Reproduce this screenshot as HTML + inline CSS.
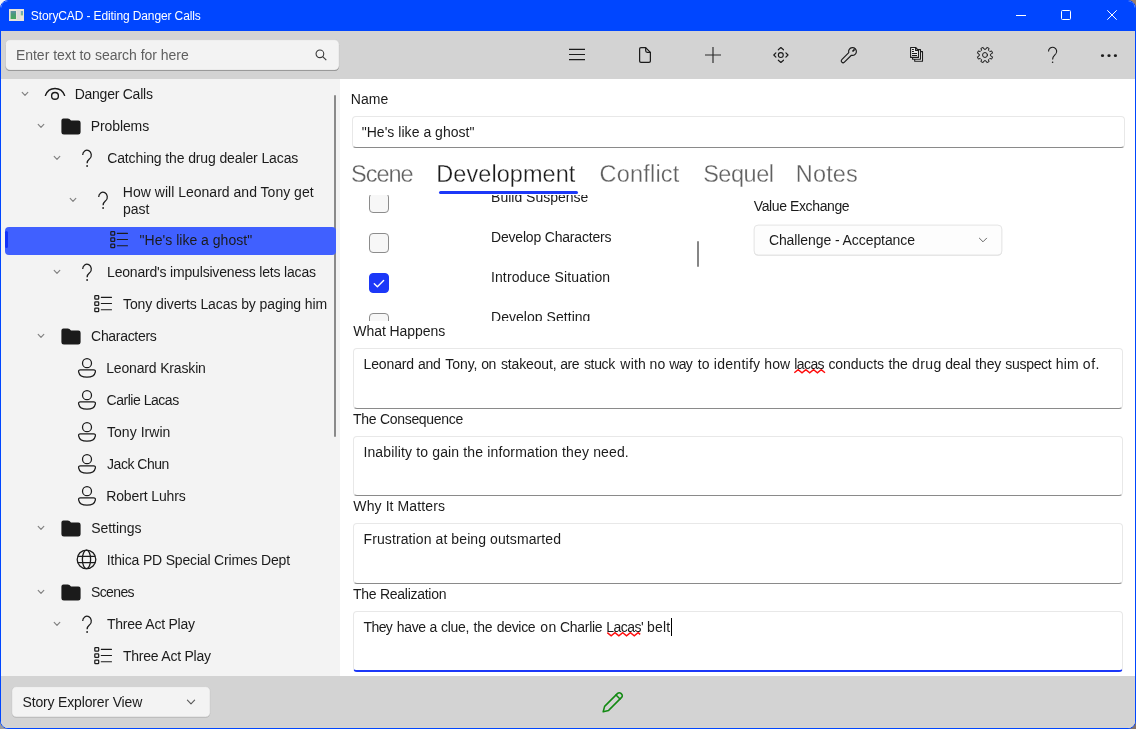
<!DOCTYPE html>
<html lang="en"><head><meta charset="utf-8"><title>StoryCAD - Editing Danger Calls</title>
<style>
html,body{margin:0;padding:0}
body{width:1136px;height:729px;overflow:hidden;position:relative;background:#8a7a70;font-family:"Liberation Sans", sans-serif;font-size:14px;color:#1b1b1b}
.win{position:absolute;left:0;top:0;width:1134px;height:727px;border:1px solid #0046ff;border-radius:8px;overflow:hidden;background:#fff;will-change:transform}
.abs,.t,svg{position:absolute}
.t{white-space:nowrap}
svg{overflow:visible}
.titlebar{left:0;top:0;width:1134px;height:30px;background:#0046ff}
.toolbar{left:0;top:30px;width:1134px;height:48px;background:#d3d3d3}
.left{left:0;top:78px;width:339px;height:597px;background:#f3f3f3}
.right{left:339px;top:78px;width:795px;height:597px;background:#fff}
.status{left:0;top:675px;width:1134px;height:52px;background:#d3d3d3}
.box{box-sizing:border-box;border:1px solid #e8e8e8;border-bottom:1px solid #8a8a8a;border-radius:4px;background:#fff}
.ctl{box-sizing:border-box;border:1px solid #e6e6e6;border-bottom-color:#d2d2d2;border-radius:4px;background:#fdfdfd}
.cb{box-sizing:border-box;width:20px;height:20px;border:1px solid #8c8c8c;border-radius:4px;background:#f7f7f7}
.cb.on{border-color:#1c38f8;background:#1c38f8}
</style></head><body>
<div class="abs" style="left:0;top:0;width:12px;height:12px;background:#f4f4f4"></div><div class="abs" style="right:0;top:0;width:12px;height:12px;background:#9c7e66"></div><div class="abs" style="left:0;bottom:0;width:12px;height:12px;background:#9c9c9c"></div><div class="abs" style="right:0;bottom:0;width:12px;height:12px;background:#84726a"></div>
<div class="win">
<div class="abs titlebar"></div><svg style="left:8px;top:8px" width="15" height="12" viewBox="0 0 15 12"><defs><linearGradient id="g1" x1="0" y1="0" x2="0" y2="1"><stop offset="0" stop-color="#5f8fa6"/><stop offset="0.45" stop-color="#4a9a76"/><stop offset="1" stop-color="#46a85a"/></linearGradient><linearGradient id="g2" x1="0" y1="0" x2="0" y2="1"><stop offset="0" stop-color="#6f9fd0"/><stop offset="1" stop-color="#7fc07a"/></linearGradient></defs><rect x="0" y="0" width="15" height="12" fill="#e9e4d8"/><rect x="1.6" y="2" width="5.4" height="8" fill="url(#g1)"/><rect x="8" y="1" width="3.4" height="10" fill="#dcdcdc"/><rect x="11.8" y="2" width="2.2" height="4.4" fill="url(#g2)"/></svg><svg style="left:1015px;top:4px" width="120" height="20" viewBox="0 0 120 20" fill="none" stroke="#fff" stroke-width="1"><path d="M0 10.5H10"/><rect x="45.5" y="5.5" width="9" height="9" rx="1"/><path d="M91.3 5.3l9.4 9.4M100.7 5.3l-9.4 9.4"/></svg><div class="abs toolbar"></div><svg style="left:0;top:0" width="345" height="80"><rect x="4.5" y="39.7" width="333.6" height="30.4" rx="4.5" fill="#858585"/><rect x="4.5" y="38.7" width="333.6" height="30.4" rx="4.5" fill="#f3f3f3" stroke="#cbcbcb" stroke-width="0.5"/></svg><svg style="left:314px;top:48px" width="12" height="12" viewBox="0 0 12 12" fill="none" stroke="#3a3a3a" stroke-width="1.1"><circle cx="4.9" cy="4.8" r="3.85"/><path d="M7.7 7.6L11.3 11.2"/></svg><svg style="left:566.0px;top:44.0px" width="20" height="20" viewBox="0 0 20 20" fill="none" stroke="#1b1b1b" stroke-width="1.2" stroke-linecap="round" stroke-linejoin="round"><path d="M2 4.4H18M2 9.5H18M2 14.6H18" stroke-width="1.15" stroke-linecap="butt"/></svg><svg style="left:634.0px;top:44.0px" width="20" height="20" viewBox="0 0 20 20" fill="none" stroke="#1b1b1b" stroke-width="1.2" stroke-linecap="round" stroke-linejoin="round"><path d="M6 2.6H10.6L15.4 7.4V16Q15.4 17.4 14 17.4H6Q4.6 17.4 4.6 16V4Q4.6 2.6 6 2.6Z" stroke-width="1.25"/><path d="M10.7 2.8V5.8Q10.7 7.3 12.2 7.3H15.2" stroke-width="1.25"/></svg><svg style="left:702.0px;top:44.0px" width="20" height="20" viewBox="0 0 20 20" fill="none" stroke="#1b1b1b" stroke-width="1.2" stroke-linecap="round" stroke-linejoin="round"><path d="M10 2V18M2 10H18" stroke="#2a2a2a" stroke-width="1.15" stroke-linecap="butt"/></svg><svg style="left:770.0px;top:44.0px" width="20" height="20" viewBox="0 0 20 20" fill="none" stroke="#1b1b1b" stroke-width="1.2" stroke-linecap="round" stroke-linejoin="round"><circle cx="9.8" cy="10" r="2.45" stroke-width="1.15"/><path d="M7.3 4.8L9.9 2.5L12.5 4.8M7.3 15.2L9.9 17.5L12.5 15.2M4.9 7.8L2.8 10L4.9 12.2M14.9 7.8L17 10L14.9 12.2" stroke-width="1.15"/></svg><svg style="left:838.0px;top:44.0px" width="20" height="20" viewBox="0 0 20 20" fill="none" stroke="#1b1b1b" stroke-width="1.2" stroke-linecap="round" stroke-linejoin="round"><path d="M9.77 7.62L2.79 14.59A1.85 1.85 0 0 0 5.41 17.21L12.38 10.23A3.9 3.9 0 1 0 9.77 7.62Z" stroke-width="1.15"/><path d="M15.6 4.4L13.5 6.5" stroke-width="1.7" stroke-linecap="butt"/></svg><svg style="left:908.0px;top:45.0px" width="16" height="18" viewBox="0 0 16 18" fill="#e9e9e9" stroke="#1b1b1b" stroke-width="1.1" stroke-linejoin="round"><path d="M5.7 5.6H13.5V15.3H5.7Z"/><path d="M3.6 3.6H11.5V13.3H3.6Z"/><path d="M1.6 1.5H6.6L9.5 4.4V11.4H1.6Z"/><path d="M6.6 1.5V4.4H9.5" fill="none"/><path d="M3 3.5H4.9M3 5.5H4.9M3 7.5H8M3 9.5H8" stroke-width="1" fill="none"/></svg><svg style="left:974.0px;top:44.0px" width="20" height="20" viewBox="0 0 20 20" fill="none" stroke="#1b1b1b" stroke-width="1.2" stroke-linecap="round" stroke-linejoin="round"><path d="M15.82 10.97L17.58 11.82L16.65 14.08L14.80 13.43L13.43 14.80L14.08 16.65L11.82 17.58L10.97 15.82L9.03 15.82L8.18 17.58L5.92 16.65L6.57 14.80L5.20 13.43L3.35 14.08L2.42 11.82L4.18 10.97L4.18 9.03L2.42 8.18L3.35 5.92L5.20 6.57L6.57 5.20L5.92 3.35L8.18 2.42L9.03 4.18L10.97 4.18L11.82 2.42L14.08 3.35L13.43 5.20L14.80 6.57L16.65 5.92L17.58 8.18L15.82 9.03Z" stroke-width="1"/><circle cx="10" cy="10" r="2.45" stroke-width="1"/></svg><svg style="left:1042.0px;top:44.0px" width="20" height="20" viewBox="0 0 20 20" fill="none" stroke="#1b1b1b" stroke-width="1.2" stroke-linecap="round" stroke-linejoin="round"><path d="M5.5 6.4A4.1 4.1 0 1 1 12.7 9C11.4 10.4 9.6 11.2 9.6 14.4" stroke-width="1.1" stroke-linecap="butt"/><circle cx="9.6" cy="17.3" r="0.8" fill="#1b1b1b" stroke="none"/></svg><svg style="left:1098.0px;top:44.0px" width="20" height="20" viewBox="0 0 20 20" fill="none" stroke="#1b1b1b" stroke-width="1.2" stroke-linecap="round" stroke-linejoin="round"><ellipse cx="3.5" cy="10.7" rx="1.6" ry="1.4" fill="#1b1b1b" stroke="none"/><ellipse cx="10" cy="10.7" rx="1.6" ry="1.4" fill="#1b1b1b" stroke="none"/><ellipse cx="16.4" cy="10.7" rx="1.6" ry="1.4" fill="#1b1b1b" stroke="none"/></svg><div class="abs left"></div><div class="abs" style="left:333px;top:94px;width:2px;height:342px;background:#8a8a8a;border-radius:1px"></div><div class="abs" style="left:4px;top:226px;width:331px;height:28px;border-radius:4px;background:#4060ff"></div><div class="abs" style="left:4px;top:230px;width:3px;height:17px;border-radius:1.5px;background:#1233fa"></div><svg style="left:20.0px;top:90.0px" width="8" height="6" viewBox="0 0 8 6" fill="none" stroke="#838383" stroke-width="1.2" stroke-linecap="round" stroke-linejoin="round"><path d="M1.2 1.4L4 4.3L6.8 1.4"/></svg><svg style="left:43.0px;top:85.0px" width="22" height="16" viewBox="0 0 22 16" fill="none" stroke="#1b1b1b" stroke-width="1.4" stroke-linecap="round"><path d="M1.4 9.4C3 5.2 6.6 2.5 11 2.5S19 5.2 20.6 9.4"/><circle cx="11" cy="9.9" r="3.4"/></svg><svg style="left:36.0px;top:122.0px" width="8" height="6" viewBox="0 0 8 6" fill="none" stroke="#838383" stroke-width="1.2" stroke-linecap="round" stroke-linejoin="round"><path d="M1.2 1.4L4 4.3L6.8 1.4"/></svg><svg style="left:60.0px;top:116.5px" width="20" height="17" viewBox="0 0 20 17"><path d="M2.4 0.4H6.8Q7.8 0.4 8.5 1.1L10 2.6H17.4Q19.6 2.6 19.6 4.8V14.2Q19.6 16.6 17.2 16.6H2.8Q0.4 16.6 0.4 14.2V2.4Q0.4 0.4 2.4 0.4Z" fill="#1b1b1b"/></svg><svg style="left:52.0px;top:154.0px" width="8" height="6" viewBox="0 0 8 6" fill="none" stroke="#838383" stroke-width="1.2" stroke-linecap="round" stroke-linejoin="round"><path d="M1.2 1.4L4 4.3L6.8 1.4"/></svg><svg style="left:80.0px;top:148.5px" width="12" height="18" viewBox="0 0 12 18" fill="none" stroke="#1b1b1b" stroke-width="1.25"><path d="M1.7 5A4.3 4.8 0 1 1 8.8 8.64C7.2 10 6.1 10.8 6.1 13.2"/><circle cx="6.1" cy="16" r="0.9" fill="#1b1b1b" stroke="none"/></svg><svg style="left:68.0px;top:196.0px" width="8" height="6" viewBox="0 0 8 6" fill="none" stroke="#838383" stroke-width="1.2" stroke-linecap="round" stroke-linejoin="round"><path d="M1.2 1.4L4 4.3L6.8 1.4"/></svg><svg style="left:96.0px;top:190.5px" width="12" height="18" viewBox="0 0 12 18" fill="none" stroke="#1b1b1b" stroke-width="1.25"><path d="M1.7 5A4.3 4.8 0 1 1 8.8 8.64C7.2 10 6.1 10.8 6.1 13.2"/><circle cx="6.1" cy="16" r="0.9" fill="#1b1b1b" stroke="none"/></svg><svg style="left:108.5px;top:230.0px" width="19" height="18" viewBox="0 0 19 18" fill="none" stroke="#1b1b1b" stroke-width="1.25"><rect x="0.8" y="0.6" width="3.9" height="3.6" rx="0.7"/><rect x="0.8" y="6.8" width="3.9" height="3.6" rx="0.7"/><rect x="0.8" y="13" width="3.9" height="3.6" rx="0.7"/><path d="M7.3 2.3H17.5M7.3 8.5H17.5M7.3 14.7H17.5" stroke-linecap="round" stroke-width="1.15"/></svg><svg style="left:52.0px;top:268.0px" width="8" height="6" viewBox="0 0 8 6" fill="none" stroke="#838383" stroke-width="1.2" stroke-linecap="round" stroke-linejoin="round"><path d="M1.2 1.4L4 4.3L6.8 1.4"/></svg><svg style="left:80.0px;top:262.5px" width="12" height="18" viewBox="0 0 12 18" fill="none" stroke="#1b1b1b" stroke-width="1.25"><path d="M1.7 5A4.3 4.8 0 1 1 8.8 8.64C7.2 10 6.1 10.8 6.1 13.2"/><circle cx="6.1" cy="16" r="0.9" fill="#1b1b1b" stroke="none"/></svg><svg style="left:92.5px;top:294.0px" width="19" height="18" viewBox="0 0 19 18" fill="none" stroke="#1b1b1b" stroke-width="1.25"><rect x="0.8" y="0.6" width="3.9" height="3.6" rx="0.7"/><rect x="0.8" y="6.8" width="3.9" height="3.6" rx="0.7"/><rect x="0.8" y="13" width="3.9" height="3.6" rx="0.7"/><path d="M7.3 2.3H17.5M7.3 8.5H17.5M7.3 14.7H17.5" stroke-linecap="round" stroke-width="1.15"/></svg><svg style="left:36.0px;top:332.0px" width="8" height="6" viewBox="0 0 8 6" fill="none" stroke="#838383" stroke-width="1.2" stroke-linecap="round" stroke-linejoin="round"><path d="M1.2 1.4L4 4.3L6.8 1.4"/></svg><svg style="left:60.0px;top:326.5px" width="20" height="17" viewBox="0 0 20 17"><path d="M2.4 0.4H6.8Q7.8 0.4 8.5 1.1L10 2.6H17.4Q19.6 2.6 19.6 4.8V14.2Q19.6 16.6 17.2 16.6H2.8Q0.4 16.6 0.4 14.2V2.4Q0.4 0.4 2.4 0.4Z" fill="#1b1b1b"/></svg><svg style="left:76.0px;top:357.0px" width="20" height="20" viewBox="0 0 20 20" fill="none" stroke="#1b1b1b" stroke-width="1.25"><circle cx="10" cy="5.2" r="4.5"/><path d="M3.4 11.9H16.6Q18.7 11.9 18.4 13.8C17.8 17.1 14.6 19.2 10 19.2S2.2 17.1 1.6 13.8Q1.3 11.9 3.4 11.9Z" stroke-linejoin="round"/></svg><svg style="left:76.0px;top:389.0px" width="20" height="20" viewBox="0 0 20 20" fill="none" stroke="#1b1b1b" stroke-width="1.25"><circle cx="10" cy="5.2" r="4.5"/><path d="M3.4 11.9H16.6Q18.7 11.9 18.4 13.8C17.8 17.1 14.6 19.2 10 19.2S2.2 17.1 1.6 13.8Q1.3 11.9 3.4 11.9Z" stroke-linejoin="round"/></svg><svg style="left:76.0px;top:421.0px" width="20" height="20" viewBox="0 0 20 20" fill="none" stroke="#1b1b1b" stroke-width="1.25"><circle cx="10" cy="5.2" r="4.5"/><path d="M3.4 11.9H16.6Q18.7 11.9 18.4 13.8C17.8 17.1 14.6 19.2 10 19.2S2.2 17.1 1.6 13.8Q1.3 11.9 3.4 11.9Z" stroke-linejoin="round"/></svg><svg style="left:76.0px;top:453.0px" width="20" height="20" viewBox="0 0 20 20" fill="none" stroke="#1b1b1b" stroke-width="1.25"><circle cx="10" cy="5.2" r="4.5"/><path d="M3.4 11.9H16.6Q18.7 11.9 18.4 13.8C17.8 17.1 14.6 19.2 10 19.2S2.2 17.1 1.6 13.8Q1.3 11.9 3.4 11.9Z" stroke-linejoin="round"/></svg><svg style="left:76.0px;top:485.0px" width="20" height="20" viewBox="0 0 20 20" fill="none" stroke="#1b1b1b" stroke-width="1.25"><circle cx="10" cy="5.2" r="4.5"/><path d="M3.4 11.9H16.6Q18.7 11.9 18.4 13.8C17.8 17.1 14.6 19.2 10 19.2S2.2 17.1 1.6 13.8Q1.3 11.9 3.4 11.9Z" stroke-linejoin="round"/></svg><svg style="left:36.0px;top:524.0px" width="8" height="6" viewBox="0 0 8 6" fill="none" stroke="#838383" stroke-width="1.2" stroke-linecap="round" stroke-linejoin="round"><path d="M1.2 1.4L4 4.3L6.8 1.4"/></svg><svg style="left:60.0px;top:518.5px" width="20" height="17" viewBox="0 0 20 17"><path d="M2.4 0.4H6.8Q7.8 0.4 8.5 1.1L10 2.6H17.4Q19.6 2.6 19.6 4.8V14.2Q19.6 16.6 17.2 16.6H2.8Q0.4 16.6 0.4 14.2V2.4Q0.4 0.4 2.4 0.4Z" fill="#1b1b1b"/></svg><svg style="left:74.8px;top:548.0px" width="21" height="21" viewBox="0 0 21 21" fill="none" stroke="#1b1b1b" stroke-width="1.3"><circle cx="10.5" cy="10.4" r="9.3"/><ellipse cx="10.5" cy="10.4" rx="4.1" ry="9.3"/><path d="M1.8 7.3H19.2M1.8 13.6H19.2"/></svg><svg style="left:36.0px;top:588.0px" width="8" height="6" viewBox="0 0 8 6" fill="none" stroke="#838383" stroke-width="1.2" stroke-linecap="round" stroke-linejoin="round"><path d="M1.2 1.4L4 4.3L6.8 1.4"/></svg><svg style="left:60.0px;top:582.5px" width="20" height="17" viewBox="0 0 20 17"><path d="M2.4 0.4H6.8Q7.8 0.4 8.5 1.1L10 2.6H17.4Q19.6 2.6 19.6 4.8V14.2Q19.6 16.6 17.2 16.6H2.8Q0.4 16.6 0.4 14.2V2.4Q0.4 0.4 2.4 0.4Z" fill="#1b1b1b"/></svg><svg style="left:52.0px;top:620.0px" width="8" height="6" viewBox="0 0 8 6" fill="none" stroke="#838383" stroke-width="1.2" stroke-linecap="round" stroke-linejoin="round"><path d="M1.2 1.4L4 4.3L6.8 1.4"/></svg><svg style="left:80.0px;top:614.5px" width="12" height="18" viewBox="0 0 12 18" fill="none" stroke="#1b1b1b" stroke-width="1.25"><path d="M1.7 5A4.3 4.8 0 1 1 8.8 8.64C7.2 10 6.1 10.8 6.1 13.2"/><circle cx="6.1" cy="16" r="0.9" fill="#1b1b1b" stroke="none"/></svg><svg style="left:92.5px;top:646.0px" width="19" height="18" viewBox="0 0 19 18" fill="none" stroke="#1b1b1b" stroke-width="1.25"><rect x="0.8" y="0.6" width="3.9" height="3.6" rx="0.7"/><rect x="0.8" y="6.8" width="3.9" height="3.6" rx="0.7"/><rect x="0.8" y="13" width="3.9" height="3.6" rx="0.7"/><path d="M7.3 2.3H17.5M7.3 8.5H17.5M7.3 14.7H17.5" stroke-linecap="round" stroke-width="1.15"/></svg><div class="abs right"></div><div class="abs box" style="left:351px;top:115px;width:773px;height:32px"></div><div class="abs" style="left:438px;top:190px;width:139px;height:3px;border-radius:1.5px;background:#1c38f8"></div><div class="abs" style="left:351px;top:194px;width:350px;height:126px;overflow:hidden"><div class="abs cb" style="left:17px;top:-2px"></div><span class="t" style="left:139.05px;top:-8.15px;font-size:14px;line-height:20px;color:#1b1b1b;">Build Suspense</span><div class="abs cb" style="left:17px;top:38px"></div><span class="t" style="left:139.05px;top:31.85px;font-size:14px;line-height:20px;color:#1b1b1b;letter-spacing:-0.193px;">Develop Characters</span><div class="abs cb on" style="left:17px;top:78px"></div><svg style="left:17px;top:78px" width="20" height="20" viewBox="0 0 20 20" fill="none" stroke="#fff" stroke-width="1.4" stroke-linecap="round" stroke-linejoin="round"><path d="M5.3 10.7L8.4 13.7L14.6 7.5"/></svg><span class="t" style="left:138.91px;top:71.85px;font-size:14px;line-height:20px;color:#1b1b1b;letter-spacing:0.136px;">Introduce Situation</span><div class="abs cb" style="left:17px;top:118px"></div><span class="t" style="left:139.05px;top:111.85px;font-size:14px;line-height:20px;color:#1b1b1b;letter-spacing:0.036px;">Develop Setting</span></div><div class="abs" style="left:696px;top:240px;width:2px;height:26px;background:#868686;border-radius:1px"></div><svg style="left:0;top:0" width="1010" height="260"><rect x="753.1" y="224.7" width="247.8" height="29.9" rx="4" fill="#d2d2d2"/><rect x="753.1" y="224.1" width="247.8" height="29.9" rx="4" fill="#fdfdfd" stroke="#e4e4e4" stroke-width="1"/></svg><svg style="left:977.0px;top:235.8px" width="10" height="6" viewBox="0 0 10 6" fill="none" stroke="#606060" stroke-width="0.95" stroke-linecap="round" stroke-linejoin="round"><path d="M1.4 1.2L5 4.8L8.6 1.2"/></svg><div class="abs box" style="left:352px;top:347px;width:770px;height:61px;"></div><div class="abs box" style="left:352px;top:435px;width:770px;height:60px;"></div><div class="abs box" style="left:352px;top:522px;width:770px;height:61px;"></div><div class="abs box" style="left:352px;top:610px;width:770px;height:61px;border-bottom:2px solid #1c38f8;"></div><svg style="left:0;top:0" width="10" height="10"><path d="M793.30 371.80L797.15 368.60L801.00 371.80L804.85 368.60L808.70 371.80L812.55 368.60L816.40 371.80L820.25 368.60L824.00 371.72" fill="none" stroke="#ff0d0d" stroke-width="1.45" stroke-linejoin="miter"/></svg><svg style="left:0;top:0" width="10" height="10"><path d="M606.30 631.60L610.15 634.80L614.00 631.60L617.85 634.80L621.70 631.60L625.55 634.80L629.40 631.60L633.25 634.80L637.10 631.60L639.20 633.35" fill="none" stroke="#ff0d0d" stroke-width="1.45" stroke-linejoin="miter"/></svg><div class="abs" style="left:670px;top:617px;width:1px;height:18px;background:#000"></div><div class="abs status"></div><svg style="left:0;top:0" width="230" height="727"><rect x="10.8" y="686.3" width="198.4" height="30.4" rx="4.5" fill="#b2b2b2"/><rect x="10.8" y="685.6" width="198.4" height="30.4" rx="4.5" fill="#f3f3f3" stroke="#c6c6c6" stroke-width="0.6"/></svg><svg style="left:185.1px;top:698.0px" width="10" height="6" viewBox="0 0 10 6" fill="none" stroke="#5a5a5a" stroke-width="1.15" stroke-linecap="round" stroke-linejoin="round"><path d="M1.4 1.2L5 4.8L8.6 1.2"/></svg><svg style="left:601px;top:690px" width="22" height="22" viewBox="0 0 22 22" fill="none" stroke="#128a12" stroke-width="1.55" stroke-linejoin="round" stroke-linecap="round"><path d="M1.2 20.8L2.6 15.4L15.6 2.4a2.3 2.3 0 0 1 3.3 0l0.7 0.7a2.3 2.3 0 0 1 0 3.3L6.6 19.4Z"/><path d="M14 4L18 8"/></svg><span class="t" style="left:29.86px;top:6.54px;font-size:12px;line-height:17px;color:#ffffff;letter-spacing:-0.114px;">StoryCAD - Editing Danger Calls</span><span class="t" style="left:14.95px;top:44.15px;font-size:14px;line-height:20px;color:#5f5f5f;letter-spacing:-0.027px;">Enter text to search for here</span><span class="t" style="left:73.65px;top:83.25px;font-size:14px;line-height:20px;color:#1b1b1b;letter-spacing:-0.244px;">Danger Calls</span><span class="t" style="left:89.65px;top:115.25px;font-size:14px;line-height:20px;color:#1b1b1b;letter-spacing:-0.084px;">Problems</span><span class="t" style="left:106.19px;top:147.25px;font-size:14px;line-height:20px;color:#1b1b1b;letter-spacing:-0.119px;">Catching the drug dealer Lacas</span><span class="t" style="left:138.61px;top:229.25px;font-size:14px;line-height:20px;color:#1b1b1b;letter-spacing:0.015px;">"He's like a ghost"</span><span class="t" style="left:106.05px;top:261.25px;font-size:14px;line-height:20px;color:#1b1b1b;letter-spacing:-0.187px;">Leonard's impulsiveness lets lacas</span><span class="t" style="left:121.99px;top:293.25px;font-size:14px;line-height:20px;color:#1b1b1b;letter-spacing:-0.089px;">Tony diverts Lacas by paging him</span><span class="t" style="left:90.09px;top:325.25px;font-size:14px;line-height:20px;color:#1b1b1b;letter-spacing:-0.306px;">Characters</span><span class="t" style="left:105.15px;top:357.25px;font-size:14px;line-height:20px;color:#1b1b1b;letter-spacing:-0.157px;">Leonard Kraskin</span><span class="t" style="left:105.59px;top:389.25px;font-size:14px;line-height:20px;color:#1b1b1b;letter-spacing:-0.474px;">Carlie Lacas</span><span class="t" style="left:105.99px;top:421.25px;font-size:14px;line-height:20px;color:#1b1b1b;letter-spacing:0.044px;">Tony Irwin</span><span class="t" style="left:106.08px;top:453.25px;font-size:14px;line-height:20px;color:#1b1b1b;letter-spacing:-0.479px;">Jack Chun</span><span class="t" style="left:105.15px;top:485.25px;font-size:14px;line-height:20px;color:#1b1b1b;letter-spacing:-0.117px;">Robert Luhrs</span><span class="t" style="left:90.16px;top:517.25px;font-size:14px;line-height:20px;color:#1b1b1b;letter-spacing:-0.022px;">Settings</span><span class="t" style="left:105.81px;top:549.25px;font-size:14px;line-height:20px;color:#1b1b1b;letter-spacing:-0.179px;">Ithica PD Special Crimes Dept</span><span class="t" style="left:89.93px;top:581.25px;font-size:14px;line-height:20px;color:#1b1b1b;letter-spacing:-0.600px;">Scenes</span><span class="t" style="left:105.99px;top:613.25px;font-size:14px;line-height:20px;color:#1b1b1b;letter-spacing:-0.231px;">Three Act Play</span><span class="t" style="left:121.99px;top:645.25px;font-size:14px;line-height:20px;color:#1b1b1b;letter-spacing:-0.231px;">Three Act Play</span><span class="t" style="left:121.85px;top:180.65px;font-size:14px;line-height:20px;color:#1b1b1b;letter-spacing:0.012px;">How will Leonard and Tony get</span><span class="t" style="left:121.90px;top:198.15px;font-size:14px;line-height:20px;color:#1b1b1b;">past</span><span class="t" style="left:349.65px;top:88.45px;font-size:14px;line-height:20px;color:#1b1b1b;letter-spacing:0.137px;">Name</span><span class="t" style="left:360.71px;top:121.35px;font-size:14px;line-height:20px;color:#1b1b1b;letter-spacing:0.032px;">"He's like a ghost"</span><span class="t" style="left:349.98px;top:156.56px;font-size:23.5px;line-height:33px;color:#606060;letter-spacing:-1.007px;-webkit-text-stroke:0.3px #fff;">Scene</span><span class="t" style="left:435.27px;top:156.56px;font-size:23.5px;line-height:33px;color:#1b1b1b;letter-spacing:0.063px;-webkit-text-stroke:0.3px #fff;">Development</span><span class="t" style="left:598.61px;top:156.56px;font-size:23.5px;line-height:33px;color:#606060;letter-spacing:0.184px;-webkit-text-stroke:0.3px #fff;">Conflict</span><span class="t" style="left:702.13px;top:156.56px;font-size:23.5px;line-height:33px;color:#606060;letter-spacing:-0.470px;-webkit-text-stroke:0.3px #fff;">Sequel</span><span class="t" style="left:794.87px;top:156.56px;font-size:23.5px;line-height:33px;color:#606060;letter-spacing:0.147px;-webkit-text-stroke:0.3px #fff;">Notes</span><span class="t" style="left:752.74px;top:195.35px;font-size:14px;line-height:20px;color:#1b1b1b;letter-spacing:-0.389px;">Value Exchange</span><span class="t" style="left:767.89px;top:229.45px;font-size:14px;line-height:20px;color:#1b1b1b;letter-spacing:-0.083px;">Challenge - Acceptance</span><span class="t" style="left:352.34px;top:320.15px;font-size:14px;line-height:20px;color:#1b1b1b;letter-spacing:-0.067px;">What Happens</span><span class="t" style="left:362.55px;top:353.15px;font-size:14px;line-height:20px;color:#1b1b1b;letter-spacing:-0.140px;">Leonard</span><span class="t" style="left:416.91px;top:353.15px;font-size:14px;line-height:20px;color:#1b1b1b;letter-spacing:-0.181px;">and</span><span class="t" style="left:444.29px;top:353.15px;font-size:14px;line-height:20px;color:#1b1b1b;letter-spacing:-0.066px;">Tony,</span><span class="t" style="left:480.21px;top:353.15px;font-size:14px;line-height:20px;color:#1b1b1b;letter-spacing:-0.381px;">on</span><span class="t" style="left:499.91px;top:353.15px;font-size:14px;line-height:20px;color:#1b1b1b;letter-spacing:-0.135px;">stakeout,</span><span class="t" style="left:559.31px;top:353.15px;font-size:14px;line-height:20px;color:#1b1b1b;letter-spacing:-0.559px;">are</span><span class="t" style="left:582.91px;top:353.15px;font-size:14px;line-height:20px;color:#1b1b1b;letter-spacing:-0.330px;">stuck</span><span class="t" style="left:619.32px;top:353.15px;font-size:14px;line-height:20px;color:#1b1b1b;letter-spacing:0.227px;">with</span><span class="t" style="left:648.47px;top:353.15px;font-size:14px;line-height:20px;color:#1b1b1b;letter-spacing:0.139px;">no</span><span class="t" style="left:668.17px;top:353.15px;font-size:14px;line-height:20px;color:#1b1b1b;letter-spacing:-0.600px;">way</span><span class="t" style="left:696.79px;top:353.15px;font-size:14px;line-height:20px;color:#1b1b1b;letter-spacing:0.012px;">to</span><span class="t" style="left:712.86px;top:353.15px;font-size:14px;line-height:20px;color:#1b1b1b;letter-spacing:0.272px;">identify</span><span class="t" style="left:763.23px;top:353.15px;font-size:14px;line-height:20px;color:#1b1b1b;letter-spacing:0.125px;">how</span><span class="t" style="left:793.29px;top:353.15px;font-size:14px;line-height:20px;color:#1b1b1b;letter-spacing:-0.600px;">lacas</span><span class="t" style="left:827.41px;top:353.15px;font-size:14px;line-height:20px;color:#1b1b1b;letter-spacing:-0.049px;">conducts</span><span class="t" style="left:887.39px;top:353.15px;font-size:14px;line-height:20px;color:#1b1b1b;letter-spacing:-0.017px;">the</span><span class="t" style="left:911.01px;top:353.15px;font-size:14px;line-height:20px;color:#1b1b1b;letter-spacing:0.386px;">drug</span><span class="t" style="left:944.21px;top:353.15px;font-size:14px;line-height:20px;color:#1b1b1b;letter-spacing:-0.181px;">deal</span><span class="t" style="left:974.19px;top:353.15px;font-size:14px;line-height:20px;color:#1b1b1b;letter-spacing:-0.110px;">they</span><span class="t" style="left:1004.31px;top:353.15px;font-size:14px;line-height:20px;color:#1b1b1b;letter-spacing:-0.310px;">suspect</span><span class="t" style="left:1054.83px;top:353.15px;font-size:14px;line-height:20px;color:#1b1b1b;letter-spacing:0.166px;">him</span><span class="t" style="left:1081.81px;top:353.15px;font-size:14px;line-height:20px;color:#1b1b1b;letter-spacing:0.544px;">of.</span><span class="t" style="left:352.09px;top:408.15px;font-size:14px;line-height:20px;color:#1b1b1b;letter-spacing:-0.299px;">The Consequence</span><span class="t" style="left:362.41px;top:441.15px;font-size:14px;line-height:20px;color:#1b1b1b;letter-spacing:0.144px;">Inability to gain the information they need.</span><span class="t" style="left:352.34px;top:495.15px;font-size:14px;line-height:20px;color:#1b1b1b;letter-spacing:0.103px;">Why It Matters</span><span class="t" style="left:362.55px;top:528.15px;font-size:14px;line-height:20px;color:#1b1b1b;letter-spacing:0.097px;">Frustration at being outsmarted</span><span class="t" style="left:352.09px;top:583.15px;font-size:14px;line-height:20px;color:#1b1b1b;letter-spacing:-0.276px;">The Realization</span><span class="t" style="left:362.54px;top:616.15px;font-size:14px;line-height:20px;color:#1b1b1b;letter-spacing:-0.600px;">They</span><span class="t" style="left:395.73px;top:616.15px;font-size:14px;line-height:20px;color:#1b1b1b;letter-spacing:-0.322px;">have</span><span class="t" style="left:428.45px;top:616.15px;font-size:14px;line-height:20px;color:#1b1b1b;">a</span><span class="t" style="left:440.01px;top:616.15px;font-size:14px;line-height:20px;color:#1b1b1b;letter-spacing:-0.306px;">clue,</span><span class="t" style="left:472.49px;top:616.15px;font-size:14px;line-height:20px;color:#1b1b1b;letter-spacing:-0.167px;">the</span><span class="t" style="left:495.81px;top:616.15px;font-size:14px;line-height:20px;color:#1b1b1b;letter-spacing:-0.332px;">device</span><span class="t" style="left:539.22px;top:616.15px;font-size:14px;line-height:20px;color:#1b1b1b;letter-spacing:0.600px;">on</span><span class="t" style="left:558.99px;top:616.15px;font-size:14px;line-height:20px;color:#1b1b1b;letter-spacing:-0.288px;">Charlie</span><span class="t" style="left:605.35px;top:616.15px;font-size:14px;line-height:20px;color:#1b1b1b;letter-spacing:-0.536px;">Lacas'</span><span class="t" style="left:646.10px;top:616.15px;font-size:14px;line-height:20px;color:#1b1b1b;letter-spacing:0.176px;">belt</span><span class="t" style="left:21.56px;top:690.95px;font-size:14px;line-height:20px;color:#1b1b1b;letter-spacing:-0.166px;">Story Explorer View</span></div></body></html>
